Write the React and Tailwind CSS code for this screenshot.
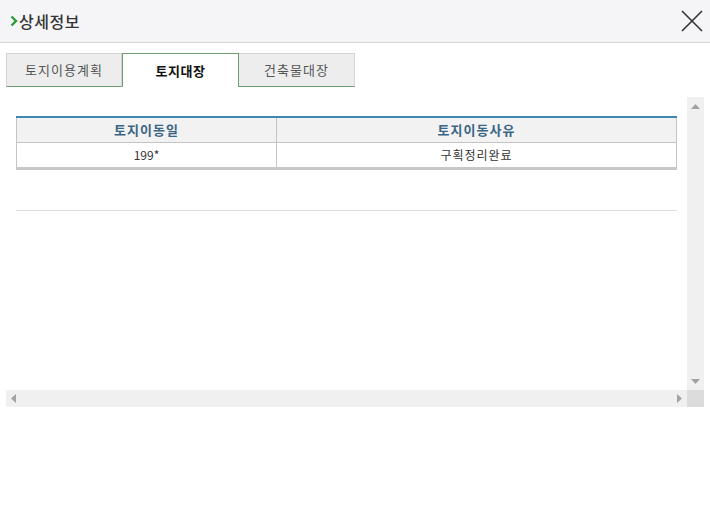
export default function App() {
  const font = { fontFamily: '"Noto Sans CJK KR", "Noto Sans", sans-serif' };
  return (
    <div className="w-[710px] h-[509px] bg-white text-[#333]" style={font}>
      {/* header */}
      <div className="h-[43px] bg-[#f5f5f7] border-b border-[#d6d6d6] flex items-center justify-between pl-[10px] pr-[7px]">
        <div className="flex items-center">
          <svg width="8" height="12" viewBox="0 0 8 12" className="mr-[1px]">
            <path d="M1.5 1.5 L6 6 L1.5 10.5" fill="none" stroke="#2a9a3a" strokeWidth="2.4" />
          </svg>
          <span className="text-[16px] font-medium text-[#333] leading-none tracking-[0.5px]">상세정보</span>
        </div>
        <svg width="22" height="22" viewBox="0 0 22 22">
          <path d="M1 1 L21 21 M21 1 L1 21" stroke="#333" strokeWidth="1.6" />
        </svg>
      </div>

      {/* tabs */}
      <div className="flex pl-[6px] mt-[10px]">
        <div className="w-[116px] h-[34px] bg-[#ededed] border border-[#d4d4d4] border-b-[#6f9f6f] flex items-center justify-center text-[13px] tracking-[1px] text-[#555]">
          토지이용계획
        </div>
        <div className="w-[117px] h-[34px] bg-white border border-[#6f9f6f] border-b-0 flex items-center justify-center text-[13px] tracking-[0.5px] font-bold text-[#111]">
          토지대장
        </div>
        <div className="w-[116px] h-[34px] bg-[#ededed] border border-[#d4d4d4] border-l-0 border-b-[#6f9f6f] flex items-center justify-center text-[13px] tracking-[1px] text-[#555]">
          건축물대장
        </div>
      </div>

      {/* content scroll box */}
      <div className="mt-[10px] ml-[6px] w-[698px] h-[310px] flex flex-col">
        <div className="flex h-[293px]">
          <div className="w-[681px] pl-[10px] pt-[19px]">
            <div className="w-[661px]">
              <div className="h-[2px] bg-[#3f86b5]" />
              <div className="flex h-[25px] bg-[#f2f2f2] border-l border-r border-b border-[#c4c4c4]">
                <div className="w-[260px] border-r border-[#c4c4c4] flex items-center justify-center text-[13px] tracking-[1px] font-bold text-[#3a6584]">
                  토지이동일
                </div>
                <div className="flex-1 flex items-center justify-center text-[13px] tracking-[1px] font-bold text-[#3a6584]">
                  토지이동사유
                </div>
              </div>
              <div className="flex h-[24px] bg-white border-l border-r border-[#c4c4c4]">
                <div className="w-[260px] border-r border-[#c4c4c4] flex items-center justify-center text-[12px] text-[#333]">
                  199*
                </div>
                <div className="flex-1 flex items-center justify-center text-[12px] tracking-[1px] text-[#333]">
                  구획정리완료
                </div>
              </div>
              <div className="h-[3px] bg-[#c8c8c8]" />
              <div className="mt-[40px] h-[1px] bg-[#dddddd]" />
            </div>
          </div>
          <div className="w-[17px] bg-[#f0f0f0] flex flex-col items-center justify-between pt-[7px] pb-[6px]">
            <svg width="9" height="5" viewBox="0 0 9 5"><path d="M0 5 L4.5 0 L9 5 Z" fill="#a3a3a3" /></svg>
            <svg width="9" height="5" viewBox="0 0 9 5"><path d="M0 0 L4.5 5 L9 0 Z" fill="#a3a3a3" /></svg>
          </div>
        </div>
        <div className="flex h-[17px]">
          <div className="w-[681px] bg-[#f0f0f0] flex items-center justify-between px-[5px]">
            <svg width="5" height="9" viewBox="0 0 5 9"><path d="M5 0 L0 4.5 L5 9 Z" fill="#a3a3a3" /></svg>
            <svg width="5" height="9" viewBox="0 0 5 9"><path d="M0 0 L5 4.5 L0 9 Z" fill="#a3a3a3" /></svg>
          </div>
          <div className="w-[17px] bg-[#dcdcdc]" />
        </div>
      </div>
    </div>
  );
}
